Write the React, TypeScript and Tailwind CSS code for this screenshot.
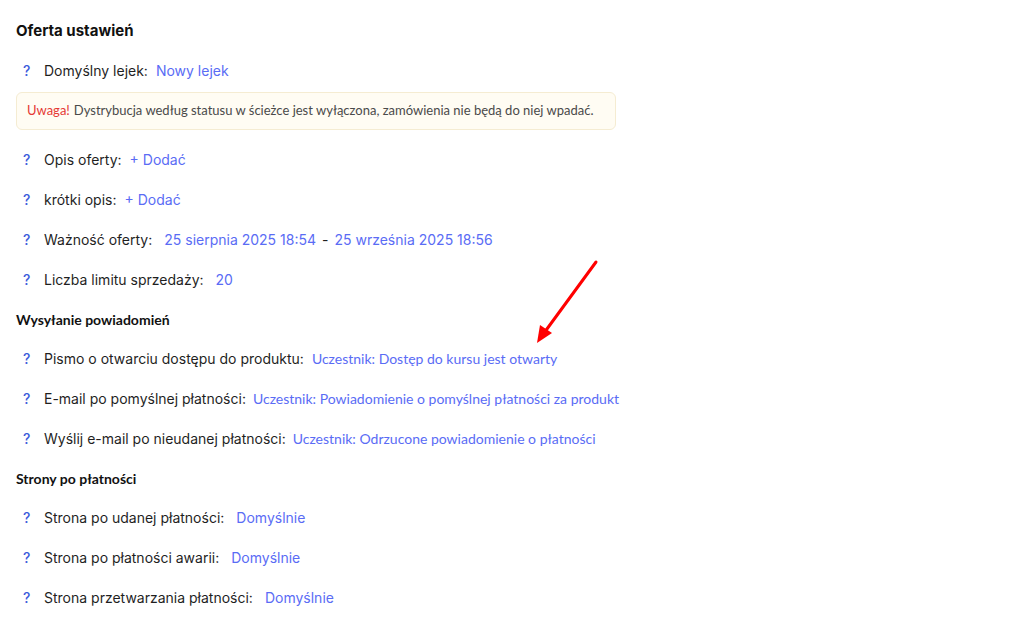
import type { ReactNode } from "react";

const LINK = "text-[#5a6cf5]";

function Row({
  label,
  gap = "ml-2",
  children,
  h = "h-10",
}: {
  label: string;
  gap?: string;
  children: ReactNode;
  h?: string;
}) {
  return (
    <div className={`flex items-center ${h} text-[14px] leading-5`}>
      <span className="w-[28px] pl-[7px] font-['Inter'] font-medium text-[#3b5bdb]">
        ?
      </span>
      <span className="font-['Inter'] text-[#1f1f1f]">{label}</span>
      <span className={gap}>{children}</span>
    </div>
  );
}

function SectionTitle({ title, h }: { title: string; h: string }) {
  return (
    <div
      className={`flex items-center ${h} font-['Lato'] text-[14px] font-bold text-[#111]`}
    >
      {title}
    </div>
  );
}

export default function App() {
  return (
    <div className="relative h-[620px] w-[1015px] bg-white px-4 pt-5">
      <h1 className="mb-[10px] mt-px h-5 font-['Inter'] text-[15px] font-bold leading-5 text-[#111]">
        Oferta ustawień
      </h1>

      <Row label="Domyślny lejek:">
        <span className={`font-['Inter'] ${LINK}`}>Nowy lejek</span>
      </Row>

      <div className="mt-px flex h-[38px] w-[600px] items-center rounded-md border border-[#f5ecd2] bg-[#fffcf3] px-[10px] font-['Lato'] text-[13px]">
        <span className="text-[#e53935]">Uwaga!</span>
        <span className="ml-1 text-[#4a4a4a]">
          Dystrybucja według statusu w ścieżce jest wyłączona, zamówienia nie
          będą do niej wpadać.
        </span>
      </div>

      <div className="mt-[10px]">
        <Row label="Opis oferty:">
          <span className={`font-['Inter'] ${LINK}`}>+ Dodać</span>
        </Row>
        <Row label="krótki opis:">
          <span className={`font-['Inter'] ${LINK}`}>+ Dodać</span>
        </Row>
        <Row label="Ważność oferty:" gap="ml-3">
          <span className={`font-['Inter'] ${LINK}`}>
            25 sierpnia 2025 18:54
          </span>
          <span className="mx-[6px] font-['Inter'] text-[#1f1f1f]">-</span>
          <span className={`font-['Inter'] ${LINK}`}>
            25 września 2025 18:56
          </span>
        </Row>
        <Row label="Liczba limitu sprzedaży:" gap="ml-3">
          <span className={`font-['Inter'] ${LINK}`}>20</span>
        </Row>

        <SectionTitle title="Wysyłanie powiadomień" h="h-[39px]" />
        <Row label="Pismo o otwarciu dostępu do produktu:">
          <span className={`font-['Lato'] ${LINK}`}>
            Uczestnik: Dostęp do kursu jest otwarty
          </span>
        </Row>
        <Row label="E-mail po pomyślnej płatności:" gap="ml-[7px]">
          <span className={`font-['Lato'] ${LINK}`}>
            Uczestnik: Powiadomienie o pomyślnej płatności za produkt
          </span>
        </Row>
        <Row label="Wyślij e-mail po nieudanej płatności:" gap="ml-[7px]">
          <span className={`font-['Lato'] ${LINK}`}>
            Uczestnik: Odrzucone powiadomienie o płatności
          </span>
        </Row>

        <SectionTitle title="Strony po płatności" h="h-[39px]" />
        <Row label="Strona po udanej płatności:" gap="ml-3">
          <span className={`font-['Inter'] ${LINK}`}>Domyślnie</span>
        </Row>
        <Row label="Strona po płatności awarii:" gap="ml-3">
          <span className={`font-['Inter'] ${LINK}`}>Domyślnie</span>
        </Row>
        <Row label="Strona przetwarzania płatności:" gap="ml-3">
          <span className={`font-['Inter'] ${LINK}`}>Domyślnie</span>
        </Row>
      </div>

      {/* annotation arrow */}
      <svg
        className="pointer-events-none absolute left-[530px] top-[255px]"
        width="80"
        height="95"
        viewBox="0 0 80 95"
      >
        <line
          x1="66"
          y1="7"
          x2="14"
          y2="78"
          stroke="#ff0000"
          strokeWidth="3"
          strokeLinecap="round"
        />
        <polygon points="7,88 10,70 22,78" fill="#ff0000" />
      </svg>
    </div>
  );
}
